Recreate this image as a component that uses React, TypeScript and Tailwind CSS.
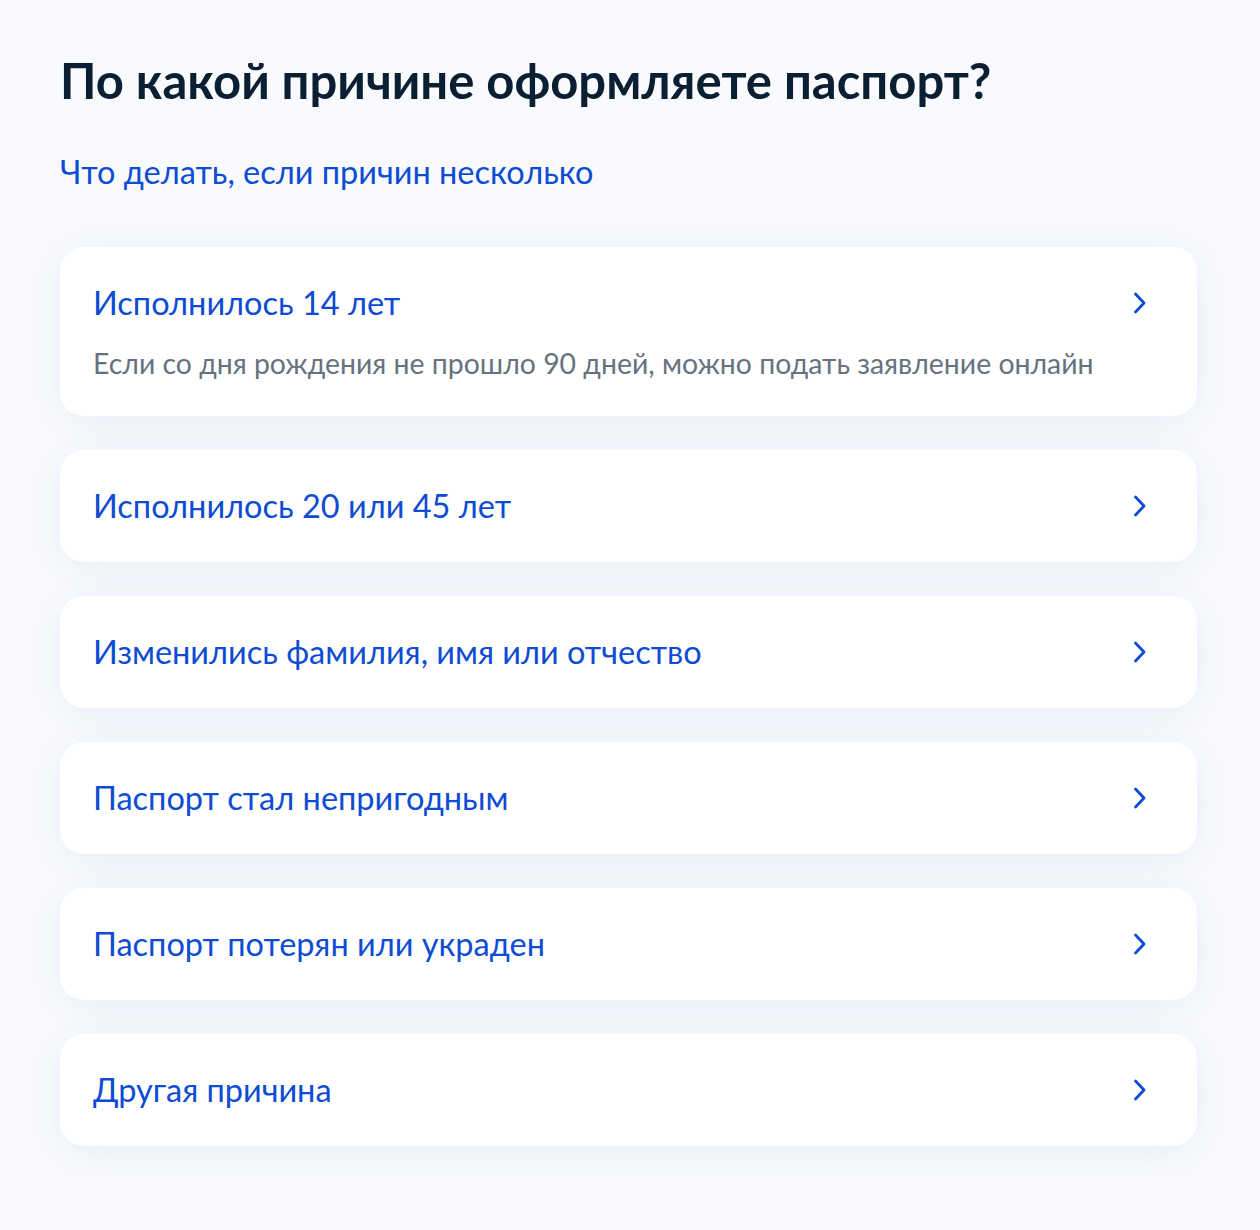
import { ReactNode } from 'react';

type Reason = {
  title: string;
  note?: string;
};

const reasons: Reason[] = [
  {
    title: 'Исполнилось 14 лет',
    note: 'Если со дня рождения не прошло 90 дней, можно подать заявление онлайн',
  },
  { title: 'Исполнилось 20 или 45 лет' },
  { title: 'Изменились фамилия, имя или отчество' },
  { title: 'Паспорт стал непригодным' },
  { title: 'Паспорт потерян или украден' },
  { title: 'Другая причина' },
];

function Chevron() {
  return (
    <svg width="24" height="24" viewBox="0 0 24 24" fill="none" className="shrink-0">
      <path
        d="M7.5 3L16 12L7.5 21"
        stroke="#0d4cd3"
        strokeWidth="2.8"
        strokeLinecap="round"
        strokeLinejoin="round"
      />
    </svg>
  );
}

function Card({ children }: { children: ReactNode }) {
  return (
    <button className="w-full text-left bg-white rounded-[24px] shadow-[0_6px_40px_rgba(35,70,140,0.07)] pl-[33px] pr-[45px] py-[32px] flex items-start gap-6">
      {children}
    </button>
  );
}

export default function App() {
  return (
    <div className="min-h-screen bg-[#f8fafd] font-['Lato','Noto_Sans',sans-serif]">
      <div className="px-[60px] pt-[50px] pb-[80px] w-[1257px]">
        <h1 className="text-[49px] leading-[60px] font-bold text-[#0b1f33]">
          По какой причине оформляете паспорт?
        </h1>
        <a href="#" className="block mt-[41px] text-[32.5px] leading-[42px] text-[#0d4cd3]">
          Что делать, если причин несколько
        </a>

        <div className="mt-[54px] flex flex-col gap-[34px]">
          {reasons.map((r) => (
            <Card key={r.title}>
              <div className="flex-1">
                <div className="text-[32.5px] leading-[48px] text-[#0d4cd3]">{r.title}</div>
                {r.note && (
                  <div className="mt-[15px] text-[28.4px] leading-[42px] text-[#66727f]">{r.note}</div>
                )}
              </div>
              <div className="h-[48px] flex items-center">
                <Chevron />
              </div>
            </Card>
          ))}
        </div>
      </div>
    </div>
  );
}
